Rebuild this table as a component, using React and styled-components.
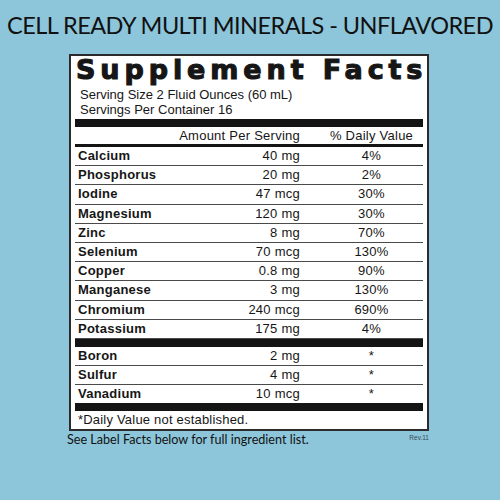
import React from "react";
import styled, { createGlobalStyle } from "styled-components";

const GlobalStyle = createGlobalStyle`
  html, body {
    margin: 0;
    padding: 0;
    background: #8dc6da;
  }
  body {
    width: 500px;
    height: 500px;
    overflow: hidden;
  }
`;

const Page = styled.div`
  width: 500px;
  height: 500px;
  background: #8dc6da;
  padding-top: 11px;
  box-sizing: border-box;
`;

const Heading = styled.h1`
  margin: 0;
  font-family: Lato, "Liberation Sans", sans-serif;
  font-weight: 400;
  font-size: 23.5px;
  line-height: 29px;
  letter-spacing: -0.55px;
  color: #111;
  text-align: center;
  white-space: nowrap;
`;

const Panel = styled.div`
  margin: 14px 0 0 69px;
  width: 360px;
  box-sizing: border-box;
  background: #fff;
  border: 2px solid #2b2b2b;
  padding: 0 4px;
  font-family: "Liberation Sans", Arial, sans-serif;
  color: #161616;
`;

const Title = styled.div`
  padding-left: 1px;
  font-family: "DejaVu Sans", "Liberation Sans", sans-serif;
  font-weight: 700;
  font-size: 27px;
  line-height: 27px;
  letter-spacing: 4.9px;
  white-space: nowrap;
  -webkit-text-stroke: 1.1px #161616;
`;

const Serving = styled.div`
  margin-top: 4px;
  padding-left: 5px;
  font-size: 13px;
  line-height: 15px;
`;

const Bar = styled.div`
  height: ${(p) => p.$h || 8}px;
  background: #141414;
  margin-top: ${(p) => p.$mt || 0}px;
`;

const Row = styled.div`
  display: grid;
  grid-template-columns: 95px 130px 1fr;
  height: 18.2px;
  line-height: 18px;
  font-size: 13px;
  letter-spacing: 0.25px;
  border-bottom: ${(p) => (p.$last ? "none" : "1px solid #4a4a4a")};
  white-space: nowrap;
`;

const HeadRow = styled(Row)`
  height: 17px;
  line-height: 17px;
  border-bottom: none;
`;

const Name = styled.span`
  font-weight: 700;
  padding-left: 3px;
`;

const Amount = styled.span`
  text-align: right;
`;

const Dv = styled.span`
  text-align: center;
  padding-left: 20px;
`;

const Note = styled.div`
  height: 18px;
  line-height: 18px;
  padding-left: 3px;
  font-size: 13px;
  letter-spacing: 0.2px;
`;

const Footer = styled.div`
  display: flex;
  justify-content: space-between;
  align-items: flex-start;
  margin-left: 67px;
  width: 362px;
`;

const FooterText = styled.span`
  font-family: Lato, "Liberation Sans", sans-serif;
  font-size: 12.6px;
  line-height: 18px;
  color: #111;
`;

const Rev = styled.span`
  font-family: "Liberation Sans", Arial, sans-serif;
  font-size: 6.5px;
  color: #3a4a52;
  margin-top: 3px;
`;

const minerals = [
  ["Calcium", "40 mg", "4%"],
  ["Phosphorus", "20 mg", "2%"],
  ["Iodine", "47 mcg", "30%"],
  ["Magnesium", "120 mg", "30%"],
  ["Zinc", "8 mg", "70%"],
  ["Selenium", "70 mcg", "130%"],
  ["Copper", "0.8 mg", "90%"],
  ["Manganese", "3 mg", "130%"],
  ["Chromium", "240 mcg", "690%"],
  ["Potassium", "175 mg", "4%"],
];

const others = [
  ["Boron", "2 mg", "*"],
  ["Sulfur", "4 mg", "*"],
  ["Vanadium", "10 mcg", "*"],
];

export default function App() {
  return (
    <Page>
      <GlobalStyle />
      <Heading>CELL READY MULTI MINERALS - UNFLAVORED</Heading>
      <Panel>
        <Title>Supplement Facts</Title>
        <Serving>
          Serving Size 2 Fluid Ounces (60 mL)
          <br />
          Servings Per Container 16
        </Serving>
        <Bar $mt={2} />
        <HeadRow>
          <span />
          <Amount>Amount Per Serving</Amount>
          <Dv>% Daily Value</Dv>
        </HeadRow>
        <Bar $h={3} />
        {minerals.map(([n, a, d]) => (
          <Row key={n}>
            <Name>{n}</Name>
            <Amount>{a}</Amount>
            <Dv>{d}</Dv>
          </Row>
        ))}
        <Bar />
        {others.map(([n, a, d], i) => (
          <Row key={n} $last={i === others.length - 1}>
            <Name>{n}</Name>
            <Amount>{a}</Amount>
            <Dv>{d}</Dv>
          </Row>
        ))}
        <Bar />
        <Note>*Daily Value not established.</Note>
      </Panel>
      <Footer>
        <FooterText>See Label Facts below for full ingredient list.</FooterText>
        <Rev>Rev.11</Rev>
      </Footer>
    </Page>
  );
}
